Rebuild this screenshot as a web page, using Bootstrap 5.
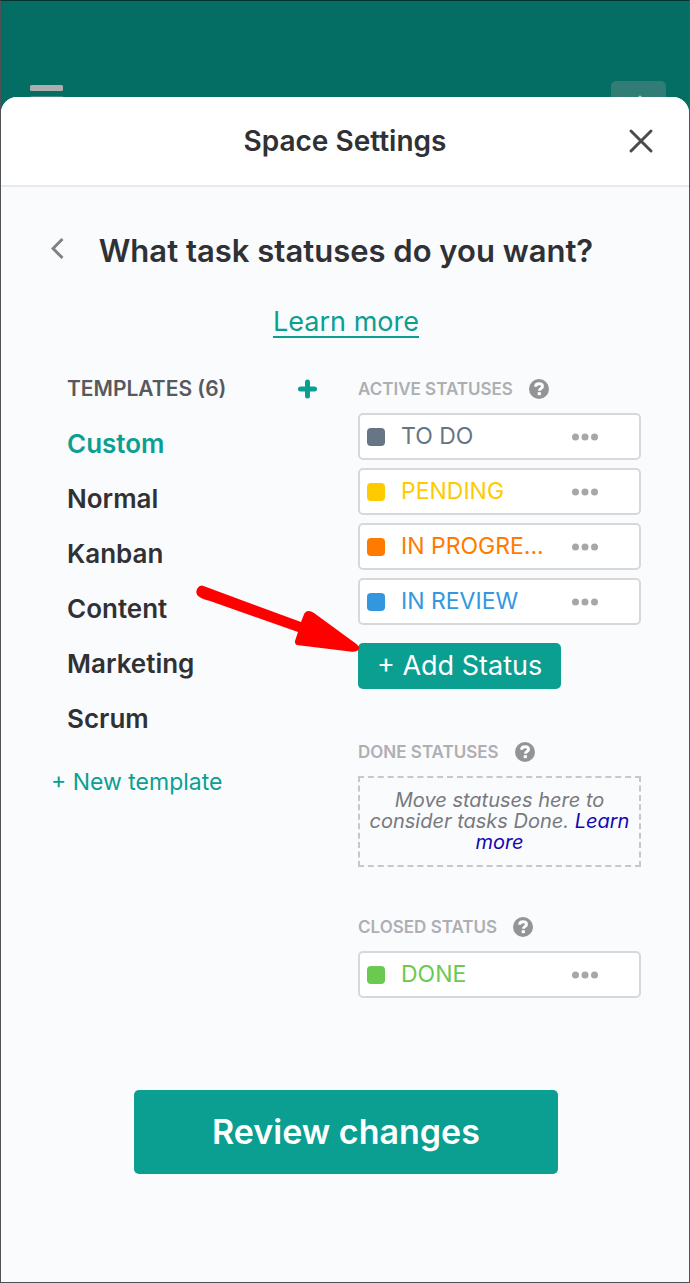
<!DOCTYPE html>
<html lang="en">
<head>
<meta charset="utf-8">
<meta name="viewport" content="width=device-width, initial-scale=1">
<title>Space Settings</title>
<link href="https://cdn.jsdelivr.net/npm/bootstrap@5.3.0/dist/css/bootstrap.min.css" rel="stylesheet">
<style>
  :root { --brand: #0a9f91; --ink: #303135; }
  body { font-family: Inter, "Open Sans", sans-serif; color: var(--ink); background: #fafbfd; line-height: 1.2; }
  .app { min-height: 100vh; background: #046e65; border: 1px solid #4e5257; border-top-color: #04332f; }
  .topbar { height: 96px; padding: 80px 23px 0 29px; overflow: hidden; }
  .icon-btn { border: 0; padding: 0; background: none; line-height: 0; flex: none; }
  .ghost-btn { background: #317c74; border-radius: 5px; }
  .sheet { background: #fafbfd; border-radius: 16px 16px 0 0; overflow: hidden; }
  .sheet-head { display: grid; grid-template-columns: 64px 1fr 64px; align-items: center; height: 90px; padding: 0 16px; background: #fff; border-bottom: 2px solid #e8e9ed; }
  .sheet-head h1 { font-size: 28px; line-height: 32px; font-weight: 600; margin: 0; }
  .sheet-body { padding: 48px 48px 0 50px; }
  .question { font-size: 31px; line-height: 32px; font-weight: 600; margin: 0; }
  .learn { font-size: 27px; line-height: 29px; color: var(--brand); text-decoration: none; border-bottom: 2px solid var(--brand); }
  .columns { padding-top: 15px; }
  .heading-row { height: 24px; }
  .templates { padding: 0 17px 0 16px; }
  .templates h2 { font-size: 21px; font-weight: 600; color: #58595d; margin: 0; }
  .templates ul { margin: 15px 0 0; }
  .template-btn { display: block; border: 0; padding: 0; background: none; width: 100%; height: 55px; text-align: left; font-size: 26px; font-weight: 600; color: var(--ink); }
  .template-btn.active { color: var(--brand); }
  .new-template { display: inline-block; margin-top: 23px; font-size: 23px; color: var(--brand); text-decoration: none; }
  .statuses h2 { font-size: 17px; font-weight: 600; color: #adafb2; margin: 0; }
  .status-list { margin: 12px 0 0; gap: 8px; }
  .status-item { height: 47px; background: #fff; border: 2px solid #d7d8db; border-radius: 5px; padding: 0 41px 0 7px; font-size: 23px; }
  .swatch { width: 18px; height: 18px; border-radius: 4px; margin-right: 16px; background: currentColor; }
  .s-todo { color: #667684; }
  .s-pending { color: #fecb00; }
  .s-progress { color: #ff7a00; }
  .s-review { color: #3397dd; }
  .s-done { color: #6bc950; }
  .brand-btn { background: var(--brand); color: #fff; border: 0; border-radius: 5px; }
  .add-wrap { margin-top: 18px; }
  .add-btn { height: 46px; padding: 0 19px; font-size: 27px; }
  .pointer { position: absolute; right: 100%; bottom: 100%; margin: 0 -2px -10px 0; z-index: 2; pointer-events: none; }
  .done-group { margin-top: 51px; }
  .closed-group { margin-top: 48px; }
  .drop-zone { margin-top: 12px; height: 91px; padding: 12px 0; border: 2px dashed #c7c8cc; font-size: 20px; line-height: 21px; font-style: italic; color: #77797d; text-align: center; }
  .drop-zone a { color: #1306b4; text-decoration: none; }
  .review-btn { width: 72%; height: 84px; margin: 92px 0 108px; font-size: 34px; font-weight: 600; }
</style>
</head>
<body>
<svg class="d-none" xmlns="http://www.w3.org/2000/svg">
  <symbol id="help" viewBox="0 0 20 20"><circle cx="10" cy="10" r="10" fill="#939496"/><path d="M6.6 7.8C6.6 5.8 8.1 4.8 10 4.8s3.500 1 3.500 2.700c0 2-3.100 2.100-3.100 4.300" fill="none" stroke="#fff" stroke-width="2.900"/><rect x="8.700" y="13.200" width="3.200" height="3" fill="#fff"/></symbol>
  <symbol id="dots" viewBox="0 0 26 8"><g fill="#a6a7aa"><circle cx="3.5" cy="4" r="3.5"/><circle cx="13" cy="4" r="3.5"/><circle cx="22.5" cy="4" r="3.5"/></g></symbol>
</svg>
<div class="app">
  <header class="topbar d-flex justify-content-between align-items-start">
    <button class="icon-btn" aria-label="Menu"><svg width="34" height="32"><g fill="#adadad"><rect y="4" width="33" height="6" rx="1.5"/><rect y="15" width="33" height="6" rx="1.5" opacity=".4"/></g></svg></button>
    <button class="icon-btn ghost-btn" aria-label="Add"><svg width="55" height="40"><path d="M29 16v20M19 26h20" stroke="#b3cdca" stroke-width="3" stroke-linecap="round"/></svg></button>
  </header>
  <main class="sheet">
    <div class="sheet-head">
      <span></span>
      <h1 class="text-center">Space Settings</h1>
      <button class="icon-btn" aria-label="Close"><svg width="26" height="26"><path d="M3 3l20 20M23 3L3 23" stroke="#4b4b4d" stroke-width="3" stroke-linecap="round"/></svg></button>
    </div>
    <div class="sheet-body">
      <div class="position-relative text-center">
        <button class="icon-btn position-absolute start-0 top-0" aria-label="Back"><svg width="14" height="26"><path d="M11.500 4L2 13.500 11.500 23" fill="none" stroke="#808184" stroke-width="3"/></svg></button>
        <h2 class="question">What task statuses do you want?</h2>
      </div>
      <div class="text-center mt-4 pt-3 mb-4"><a class="learn d-inline-block" href="#">Learn more</a></div>
      <div class="columns row gx-4">
        <section class="col-6">
          <div class="templates">
            <div class="heading-row d-flex align-items-center justify-content-between">
              <h2>TEMPLATES (6)</h2>
              <button class="icon-btn" aria-label="Add template"><svg width="20" height="20"><path d="M10.500 3v14M3.500 10h14" stroke="#0a9f91" stroke-width="5" stroke-linecap="round"/></svg></button>
            </div>
            <ul class="list-unstyled">
              <li><button class="template-btn active">Custom</button></li>
              <li><button class="template-btn">Normal</button></li>
              <li><button class="template-btn">Kanban</button></li>
              <li><button class="template-btn">Content</button></li>
              <li><button class="template-btn">Marketing</button></li>
              <li><button class="template-btn">Scrum</button></li>
            </ul>
          </div>
          <a class="new-template" href="#">+ New template</a>
        </section>
        <div class="statuses col-6">
          <section>
            <div class="heading-row d-flex align-items-center gap-3">
              <h2>ACTIVE STATUSES</h2>
              <button class="icon-btn" aria-label="About active statuses"><svg width="20" height="20"><use href="#help"/></svg></button>
            </div>
            <ul class="status-list list-unstyled d-flex flex-column">
              <li class="status-item d-flex align-items-center s-todo"><span class="swatch"></span><span class="me-auto">TO DO</span><button class="icon-btn" aria-label="To do options"><svg width="26" height="8"><use href="#dots"/></svg></button></li>
              <li class="status-item d-flex align-items-center s-pending"><span class="swatch"></span><span class="me-auto">PENDING</span><button class="icon-btn" aria-label="Pending options"><svg width="26" height="8"><use href="#dots"/></svg></button></li>
              <li class="status-item d-flex align-items-center s-progress"><span class="swatch"></span><span class="me-auto">IN PROGRE...</span><button class="icon-btn" aria-label="In progress options"><svg width="26" height="8"><use href="#dots"/></svg></button></li>
              <li class="status-item d-flex align-items-center s-review"><span class="swatch"></span><span class="me-auto">IN REVIEW</span><button class="icon-btn" aria-label="In review options"><svg width="26" height="8"><use href="#dots"/></svg></button></li>
            </ul>
            <div class="add-wrap position-relative">
              <button class="brand-btn add-btn">+ Add Status</button>
              <svg class="pointer" width="165" height="68" viewBox="195 585 165 68"><path d="M203.500 586Q200 584.500 197.300 588.500Q194.500 594 199.500 597Q202 599 210 601L298 632L295 641Q294.500 645 298.500 645.300L350 651.500Q358 652.500 359.500 648Q358.500 645 353 641.500L314 613Q307.500 609 304.300 613.500L301 622Z" fill="#fe0000"/></svg>
            </div>
          </section>
          <section class="done-group">
            <div class="heading-row d-flex align-items-center gap-3">
              <h2>DONE STATUSES</h2>
              <button class="icon-btn" aria-label="About done statuses"><svg width="20" height="20"><use href="#help"/></svg></button>
            </div>
            <div class="drop-zone">Move statuses here to consider tasks Done. <a href="#">Learn more</a></div>
          </section>
          <section class="closed-group">
            <div class="heading-row d-flex align-items-center gap-3">
              <h2>CLOSED STATUS</h2>
              <button class="icon-btn" aria-label="About closed status"><svg width="20" height="20"><use href="#help"/></svg></button>
            </div>
            <ul class="status-list list-unstyled">
              <li class="status-item d-flex align-items-center s-done"><span class="swatch"></span><span class="me-auto">DONE</span><button class="icon-btn" aria-label="Done options"><svg width="26" height="8"><use href="#dots"/></svg></button></li>
            </ul>
          </section>
        </div>
      </div>
      <div class="text-center"><button class="brand-btn review-btn">Review changes</button></div>
    </div>
  </main>
</div>
<script src="https://cdn.jsdelivr.net/npm/bootstrap@5.3.0/dist/js/bootstrap.bundle.min.js"></script>
</body>
</html>
